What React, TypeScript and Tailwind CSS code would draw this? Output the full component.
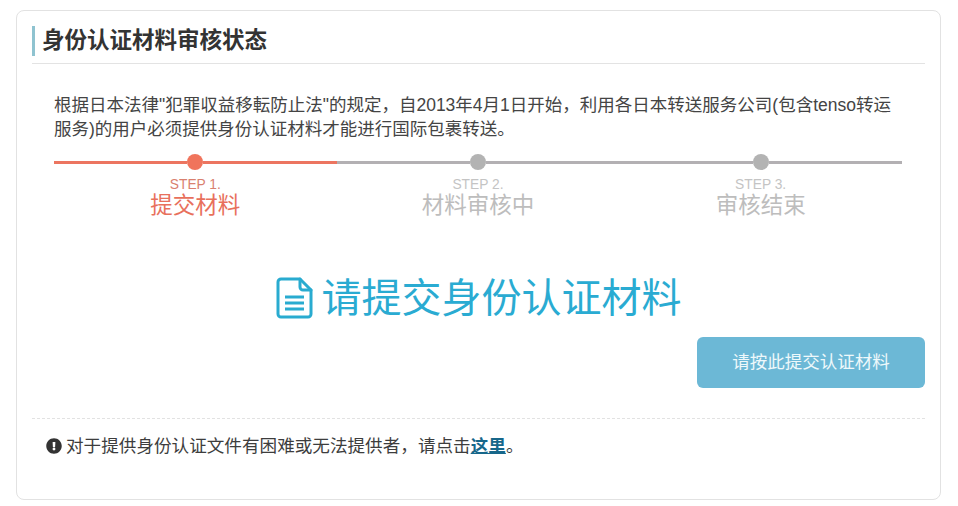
import React from "react";
import { FaExclamationCircle } from "react-icons/fa";

const steps = [
  { label: "STEP 1.", title: "提交材料", active: true },
  { label: "STEP 2.", title: "材料审核中", active: false },
  { label: "STEP 3.", title: "审核结束", active: false },
];

const DocIcon = () => (
  <svg width="37" height="42" viewBox="0 0 37 42" fill="none" stroke="#29abd0" strokeWidth="3" strokeLinejoin="round" strokeLinecap="round">
    <path d="M2 5a3 3 0 0 1 3-3h19l11 11v24a3 3 0 0 1-3 3H5a3 3 0 0 1-3-3z" />
    <path d="M24 2v8a3 3 0 0 0 3 3h8" />
    <path d="M9 20h19M9 26h19M9 32h19" strokeLinecap="butt" />
  </svg>
);

export default function App() {
  return (
    <div className="h-[506px] w-[958px] overflow-hidden bg-white pt-[10px] pl-[16px] font-['Liberation_Sans','Noto_Sans_CJK_SC',sans-serif] text-[#333]">
      <div className="h-[490px] w-[925px] rounded-lg border border-[#e2e2e2] px-[15px] pt-[15px]">
        {/* 标题 */}
        <div className="h-[38px] w-[893px] border-b border-[#e3e3e3]">
          <h2 className="h-[30px] border-l-[3px] border-[#8fc3d0] pl-[7px] text-[22.5px] leading-[30px] font-bold text-[#333]">
            身份认证材料审核状态
          </h2>
        </div>

        <p className="mt-[29px] ml-[22px] w-[850px] text-[17.5px] leading-[24px] text-[#444]">
          根据日本法律"犯罪収益移転防止法"的规定，自2013年4月1日开始，利用各日本转送服务公司(包含tenso转运
          <br />
          服务)的用户必须提供身份认证材料才能进行国际包裹转送。
        </p>

        {/* 步骤 */}
        <div className="mt-[13px] ml-[22px] grid w-[848px] grid-cols-3">
          {steps.map((s) => (
            <div key={s.label} className="flex flex-col items-center">
              <div className="flex h-[16px] w-full items-center">
                <div className={`h-[3px] flex-1 ${s.active ? "bg-[#ec7560]" : "bg-[#b3b0b3]"}`} />
                <div className={`h-[16px] w-[16px] rounded-full ${s.active ? "bg-[#f0745c]" : "bg-[#b3b3b3]"}`} />
                <div className={`h-[3px] flex-1 ${s.active ? "bg-[#ec7560]" : "bg-[#b3b0b3]"}`} />
              </div>
              <div className={`mt-[8px] text-[13.8px] leading-[14px] ${s.active ? "text-[#d9806f]" : "text-[#c4c4c4]"}`}>{s.label}</div>
              <div className={`mt-[1px] text-[22.5px] leading-[26px] ${s.active ? "text-[#e8705c]" : "text-[#bdbdbd]"}`}>{s.title}</div>
            </div>
          ))}
        </div>

        {/* 提示 */}
        <div className="mt-[55px] flex h-[48px] items-center justify-center gap-[9px] text-[40px] leading-[48px] text-[#2aabd2]">
          <DocIcon />
          <span>请提交身份认证材料</span>
        </div>

        <div className="mt-[15px] flex justify-end">
          <button className="h-[51px] w-[228px] rounded-[6px] bg-[#6cb8d6] text-[17.5px] text-[#eef8fb]">
            请按此提交认证材料
          </button>
        </div>

        <div className="mt-[30px] border-t border-dashed border-[#e2e2e2]" />

        <div className="mt-[15px] ml-[14px] flex items-center gap-[4px] text-[17.6px] leading-[24px] text-[#3d3d3d]">
          <FaExclamationCircle className="h-[16px] w-[16px] text-[#333]" />
          <span>
            对于提供身份认证文件有困难或无法提供者，请点击
            <a className="font-bold text-[#17678a] underline">这里</a>。
          </span>
        </div>
      </div>
    </div>
  );
}
